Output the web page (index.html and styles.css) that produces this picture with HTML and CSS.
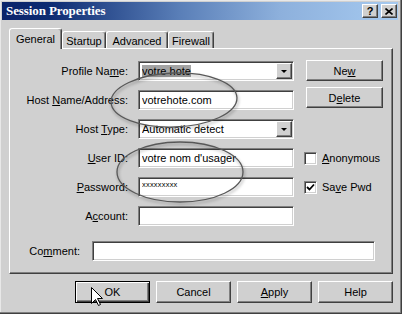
FILE: index.html
```html
<!DOCTYPE html>
<html>
<head>
<meta charset="UTF-8">
<link rel="stylesheet" href="styles.css">
</head>
<body>
<div class="window">
  <div class="titlebar">
    <span class="title">Session Properties</span>
    <div class="title-btns">
      <span class="tbtn help">?</span>
      <span class="tbtn"><svg width="8" height="7" viewBox="0 0 8 7"><path d="M0.5 0.5 L7.5 6.5 M7.5 0.5 L0.5 6.5" stroke="#000" stroke-width="1.6"/></svg></span>
    </div>
  </div>

  <div class="tabs">
    <div class="tab active">General</div>
    <div class="tab t-startup">Startup</div>
    <div class="tab t-advanced">Advanced</div>
    <div class="tab t-firewall">Firewall</div>
  </div>

  <div class="panel">
    <div class="form">
      <div class="label"><span>Profile Na<u>m</u>e:</span></div>
      <div class="field combo"><span class="value"><span class="sel">votre hote</span></span><span class="drop"><i></i></span></div>
      <div class="side-btns">
        <button class="btn">Ne<u>w</u></button>
        <button class="btn">D<u>e</u>lete</button>
      </div>

      <div class="label"><span>Host <u>N</u>ame/Address:</span></div>
      <div class="field"><span class="value">votrehote.com</span></div>

      <div class="label"><span>Host <u>T</u>ype:</span></div>
      <div class="field combo"><span class="value">Automatic detect</span><span class="drop"><i></i></span></div>
      <div></div>

      <div class="label"><span><u>U</u>ser ID:</span></div>
      <div class="field"><span class="value">votre nom d'usager</span></div>
      <div class="check"><span class="box"></span><span><u>A</u>nonymous</span></div>

      <div class="label"><span><u>P</u>assword:</span></div>
      <div class="field"><span class="value pwd">xxxxxxxxx</span></div>
      <div class="check"><span class="box"><svg width="9" height="9" viewBox="0 0 9 9"><path d="M1 4 L3.5 6.5 L8 1.5" fill="none" stroke="#000" stroke-width="1.8"/></svg></span><span>Sa<u>v</u>e Pwd</span></div>

      <div class="label"><span>A<u>c</u>count:</span></div>
      <div class="field"></div>
      <div></div>
    </div>

    <div class="comment-row">
      <div class="label"><span>Co<u>m</u>ment:</span></div>
      <div class="field wide"></div>
    </div>
  </div>

  <div class="buttons">
    <button class="btn big default">OK</button>
    <button class="btn big">Cancel</button>
    <button class="btn big"><u>A</u>pply</button>
    <button class="btn big">Help</button>
  </div>

  <svg class="marks" width="402" height="314" viewBox="0 0 402 314">
    <ellipse cx="174" cy="100" rx="63" ry="27" transform="rotate(-2 174 100)"/>
    <ellipse cx="180" cy="172" rx="63" ry="30"/>
  </svg>

  <svg class="cursor" width="13" height="20" viewBox="0 0 13 20">
    <path d="M0.5 0.5 L0.5 16.5 L4.5 12.5 L7.5 18.5 L9.5 17.5 L6.5 11.5 L11.5 11.5 Z" fill="#fff" stroke="#000" stroke-width="1"/>
  </svg>
</div>
</body>
</html>
```

FILE: styles.css
```css
* {
	box-sizing: border-box;
}

body {
	margin: 0;
	background: #d0d0d0;
	font-family: "Liberation Sans", Arial, sans-serif;
	font-size: 11px;
	color: #000;
}

.window {
	position: relative;
	width: 402px;
	height: 314px;
	padding: 2px 4px 0 2px;
	background: #d0d0d0;
	box-shadow: inset -1px -1px #404040, inset -2px -2px #808080, inset 1px 1px #e8e8e8;
}

/* title bar */
.titlebar {
	height: 18px;
	display: flex;
	align-items: center;
	justify-content: space-between;
	padding: 0 1px 0 4px;
	background: linear-gradient(90deg, #0a246a 0%, #0d2b72 12%, #5a7fb8 45%, #8db0dc 70%, #a6caf0 100%);
}

.title {
	font-family: "Liberation Serif", "Times New Roman", serif;
	font-weight: bold;
	font-size: 13px;
	color: #fff;
	letter-spacing: -0.1px;
}

.title-btns {
	display: flex;
	gap: 3px;
}

.tbtn {
	width: 16px;
	height: 14px;
	display: flex;
	align-items: center;
	justify-content: center;
	background: #d0d0d0;
	border: 1px solid;
	border-color: #fff #404040 #404040 #fff;
	box-shadow: inset -1px -1px #808080;
	font-weight: bold;
	font-size: 11px;
}

/* tabs */
.tabs {
	display: flex;
	align-items: flex-end;
	height: 20px;
	margin: 8px 0 0 7px;
	position: relative;
	z-index: 1;
}

.tab {
	height: 17px;
	display: flex;
	align-items: center;
	justify-content: center;
	border: 1px solid;
	border-bottom: none;
	border-color: #fff #404040 #fff #fff;
	border-radius: 3px 3px 0 0;
	box-shadow: inset -1px 0 #808080;
	background: #d0d0d0;
	padding-top: 1px;
}

.tab.active {
	width: 53px;
	height: 21px;
	margin-bottom: -1px;
	padding-top: 0;
}

.t-startup {
	width: 44px;
}

.t-advanced {
	width: 62px;
}

.t-firewall {
	width: 46px;
}

/* tab panel */
.panel {
	width: 384px;
	height: 226px;
	margin-left: 7px;
	padding-top: 12px;
	border: 1px solid;
	border-color: #fff #404040 #404040 #fff;
	box-shadow: inset -1px -1px #808080;
}

.form {
	display: grid;
	grid-template-columns: 118px 156px 85px;
	grid-template-rows: repeat(6, 20px);
	column-gap: 10px;
	row-gap: 9px;
}

.label {
	display: flex;
	align-items: center;
	justify-content: flex-end;
	white-space: nowrap;
}

.field {
	height: 20px;
	display: flex;
	align-items: center;
	background: #fff;
	border: 1px solid;
	border-color: #808080 #fff #fff #808080;
	box-shadow: inset 1px 1px #404040, inset -1px -1px #d0d0d0;
	padding: 0 2px 0 3px;
}

.value {
	flex: 1;
	white-space: nowrap;
	overflow: hidden;
}

.sel {
	background: #a4a4a4;
	padding: 1px 0;
}

.pwd {
	font-size: 7.5px;
	letter-spacing: 0.2px;
	margin-top: -5px;
}

.drop {
	width: 16px;
	height: 16px;
	display: flex;
	align-items: center;
	justify-content: center;
	background: #d0d0d0;
	border: 1px solid;
	border-color: #fff #404040 #404040 #fff;
	box-shadow: inset -1px -1px #808080;
	margin-right: -1px;
}

.drop i {
	width: 0;
	height: 0;
	border-left: 3px solid transparent;
	border-right: 3px solid transparent;
	border-top: 3px solid #000;
	margin-top: 1px;
}

.side-btns {
	grid-column: 3;
	grid-row: 1 / span 2;
	display: flex;
	flex-direction: column;
	gap: 6px;
	margin: -1px 0 0 2px;
}

.btn {
	font-family: "Liberation Sans", Arial, sans-serif;
	font-size: 11px;
	color: #000;
	padding: 0;
	background: #d0d0d0;
	border: 1px solid;
	border-color: #fff #404040 #404040 #fff;
	box-shadow: inset -1px -1px #808080;
}

.side-btns .btn {
	width: 77px;
	height: 21px;
}

.check {
	display: flex;
	align-items: center;
	gap: 5px;
}

.box {
	width: 13px;
	height: 13px;
	display: flex;
	align-items: center;
	justify-content: center;
	background: #fff;
	border: 1px solid;
	border-color: #808080 #fff #fff #808080;
	box-shadow: inset 1px 1px #404040, inset -1px -1px #d0d0d0;
}

.comment-row {
	display: flex;
	gap: 12px;
	margin-top: 15px;
}

.comment-row .label {
	width: 70px;
}

.field.wide {
	width: 283px;
}

/* bottom buttons */
.buttons {
	display: flex;
	justify-content: flex-end;
	gap: 6px;
	margin: 7px 5px 0 0;
}

.btn.big {
	width: 75px;
	height: 22px;
}

.btn.default {
	border: 1px solid #000;
	box-shadow: inset 1px 1px #fff, inset -1px -1px #404040, inset -2px -2px #808080;
}

/* hand-drawn marks */
.marks {
	position: absolute;
	left: 0;
	top: 0;
	pointer-events: none;
	filter: drop-shadow(1px 2px 1.5px rgba(0, 0, 0, 0.35));
}

.marks ellipse {
	fill: none;
	stroke: #585858;
	stroke-width: 1.3;
}

.cursor {
	position: absolute;
	left: 91px;
	top: 287px;
}
```
